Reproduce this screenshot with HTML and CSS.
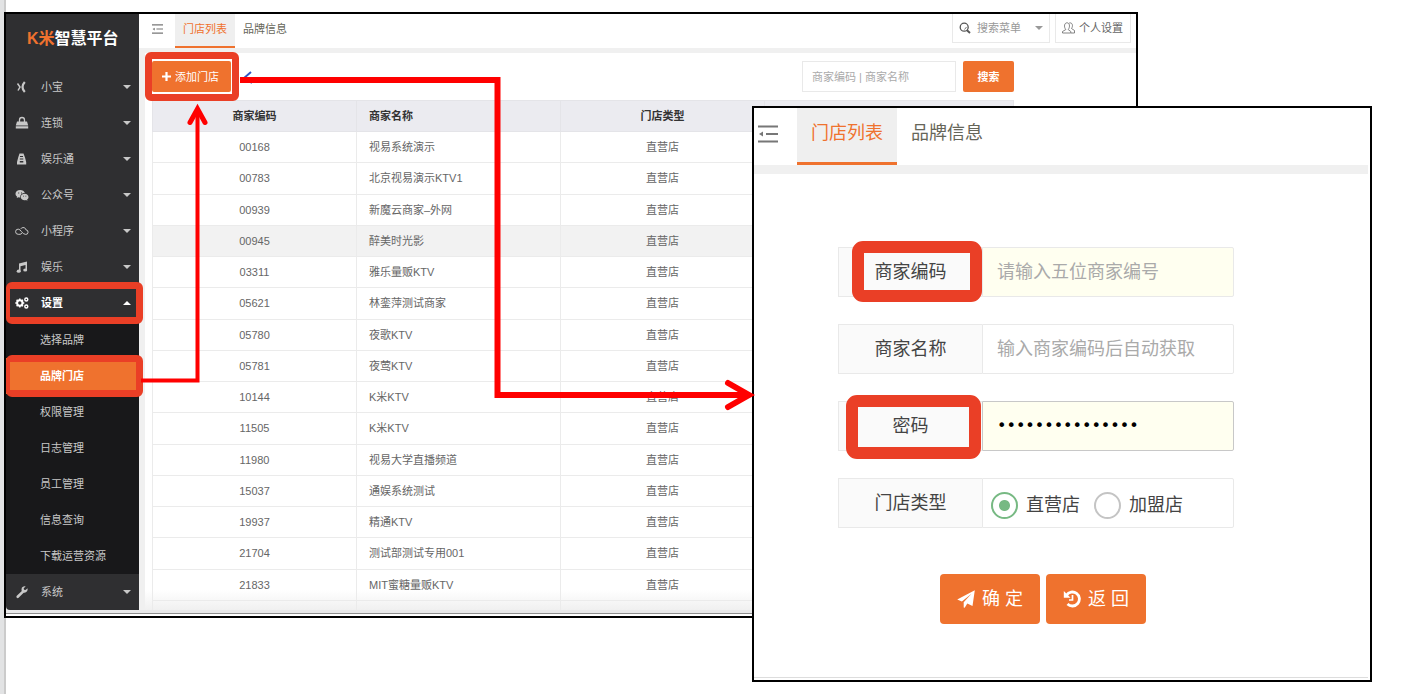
FILE: index.html
```html
<!DOCTYPE html>
<html lang="zh-CN">
<head>
<meta charset="utf-8">
<title>K米智慧平台</title>
<link rel="stylesheet" href="styles.css">
</head>
<body>
<main class="board">

  <section class="window console">
    <div class="console-body">
      <aside class="sidebar">
        <div class="logo"><span class="logo-mark">K米</span>智慧平台</div>
        <nav>
          <ul class="menu">
            <li><button class="menu-item" type="button">
              <svg class="menu-icon" viewBox="0 0 14 14"><path d="M2.5 3.5 5 7 3 10.5" fill="none" stroke="currentColor" stroke-width="1.5"/><path d="M9.8 2Q5.2 7 9.8 12" fill="none" stroke="currentColor" stroke-width="2.2"/></svg>
              <span>小宝</span><i class="caret"></i></button></li>
            <li><button class="menu-item" type="button">
              <svg class="menu-icon" viewBox="0 0 14 14"><path d="M2 5.5h10l1.2 4H.8zM.8 10.3h12.4v2.2H.8z" fill="currentColor"/><path d="M4.5 6V4a2.5 2.5 0 0 1 5 0v2" fill="none" stroke="currentColor" stroke-width="1.3"/></svg>
              <span>连锁</span><i class="caret"></i></button></li>
            <li><button class="menu-item" type="button">
              <svg class="menu-icon" viewBox="0 0 14 14"><path fill-rule="evenodd" d="M4.5 1.5h4l1.5 4 1.2 4.5v2.5H2V10l1.2-4.500zM5 4h3v1H5zm-.2 2.500h3.500v1H4.800zm0 2.500h3.500v1.500H4.800z" fill="currentColor"/></svg>
              <span>娱乐通</span><i class="caret"></i></button></li>
            <li><button class="menu-item" type="button">
              <svg class="menu-icon" viewBox="0 0 14 14"><path d="M5.200 2C2.500 2 .5 3.700.5 5.800c0 1.200.6 2.200 1.600 2.900L1.700 10l1.700-.8c.6.2 1.200.3 1.800.3C4.900 6.800 7 5 9.800 5 9.300 3.200 7.400 2 5.200 2z" fill="currentColor"/><path d="M9.600 5.800c-2.200 0-3.900 1.400-3.900 3.200s1.700 3.200 3.900 3.200c.5 0 1-.1 1.400-.2l1.500.7-.4-1.200c.9-.6 1.400-1.500 1.400-2.500 0-1.800-1.700-3.200-3.900-3.200z" fill="currentColor"/><path d="M3.200 4.400h1v1h-1zM6 4.400h1v1H6zM8 7.700h.9v.9H8zM10.400 7.700h.9v.9h-.9z" fill="#2f2f31"/></svg>
              <span>公众号</span><i class="caret"></i></button></li>
            <li><button class="menu-item" type="button">
              <svg class="menu-icon" viewBox="0 0 14 14"><path d="M5 10.300H3.200a2.600 2.600 0 0 1 0-5.200C6 5.100 7 10.400 10.600 10.400a2.300 2.300 0 0 0 .3-4.600C10.600 4.200 9.400 3.400 8 3.600c-1.500.1-2 .9-2.300 1.500M5 10.300c1 0 1.600-.6 2-1.300" fill="none" stroke="currentColor" stroke-width="1"/></svg>
              <span>小程序</span><i class="caret"></i></button></li>
            <li><button class="menu-item" type="button">
              <svg class="menu-icon" viewBox="0 0 14 14"><path d="M4 3.500 12 1.500v8.500h-1.500V5L5.500 6.300v5H4z" fill="currentColor"/><ellipse cx="3.700" cy="11.200" rx="2" ry="1.600" fill="currentColor"/><ellipse cx="10.200" cy="10" rx="2" ry="1.600" fill="currentColor"/></svg>
              <span>娱乐</span><i class="caret"></i></button></li>
            <li><button class="menu-item is-open" type="button" aria-expanded="true">
              <svg class="menu-icon" viewBox="0 0 14 14" fill="none" stroke="currentColor"><circle cx="4.800" cy="7" r="2.700" stroke-width="2"/><path d="M4.800 2.500v1.500M4.800 10v1.500M.3 7h1.500M7.800 7h1.500M1.600 3.800l1 1M7 9.200l1 1M8 3.800l-1 1M2.600 9.200l-1 1" stroke-width="1.500"/><circle cx="11.300" cy="3.500" r="1.500" stroke-width="1.400"/><circle cx="11.300" cy="10.500" r="1.500" stroke-width="1.400"/></svg>
              <span>设置</span><i class="caret caret-up"></i><i class="mark mark-row"></i></button>
              <ul class="submenu">
                <li><a href="#brand">选择品牌</a></li>
                <li><a class="is-active" href="#stores">品牌门店<i class="mark mark-row"></i></a></li>
                <li><a href="#roles">权限管理</a></li>
                <li><a href="#logs">日志管理</a></li>
                <li><a href="#staff">员工管理</a></li>
                <li><a href="#query">信息查询</a></li>
                <li><a href="#download">下载运营资源</a></li>
              </ul></li>
            <li><button class="menu-item" type="button">
              <svg class="menu-icon" viewBox="0 0 14 14"><path d="M2.700 11.800 8 6.600" stroke="currentColor" stroke-width="2.600" stroke-linecap="round"/><path d="M12.600 3.300 10.500 5 9 4.800l-.3-1.500L10.600 1.500C8.800 1 6.700 2 6.500 4.200c-.2 2 1.300 3.500 3 3.500 2.200-.1 3.500-2 3.100-4.400z" fill="currentColor"/></svg>
              <span>系统</span><i class="caret"></i></button></li>
          </ul>
        </nav>
      </aside>

      <div class="workspace">
        <header class="topbar">
          <button class="fold" type="button" aria-label="收起菜单"><svg viewBox="0 0 20 18"><path d="M0 1.500h20M8 9h12M0 16.500h20" stroke="currentColor" stroke-width="2"/><path d="M5 6.500v5L1 9z" fill="currentColor"/></svg></button>
          <nav class="tabs"><a class="is-active" href="#stores">门店列表</a><a href="#info">品牌信息</a></nav>
          <div class="tools">
            <label class="menu-search">
              <svg viewBox="0 0 12 12" fill="none" stroke="currentColor"><circle cx="5.200" cy="5.200" r="4" stroke-width="1.300"/><path d="M8 8.200 11 11" stroke-width="1.900"/><path d="M5.500 7.500 7.500 5" stroke-width=".8"/></svg>
              <select aria-label="搜索菜单"><option>搜索菜单</option></select>
              <i class="caret"></i>
            </label>
            <button class="profile" type="button">
              <svg viewBox="0 0 13 12" fill="none" stroke="currentColor" stroke-width=".8"><path d="M.5 11V9.500L3.800 7.600C1.500 4.500 2.500.8 5 .8s3.500 3.700 1.200 6.800l2.600 1.900V11zM7.200 1c3-.9 4.300 2.700 2.300 5.500L12.500 8.500V11H9"/></svg>
              个人设置</button>
          </div>
        </header>

        <div class="content">
          <div class="toolbar">
            <button class="btn btn-add" type="button"><svg viewBox="0 0 9 9"><path d="M4.500 0v9M0 4.500h9" stroke="currentColor" stroke-width="2.200"/></svg>添加门店<i class="mark mark-add"></i></button>
            <form class="filter">
              <input type="text" aria-label="商家编码或商家名称" placeholder="商家编码 | 商家名称">
              <button class="btn" type="button">搜索</button>
            </form>
          </div>
          <div class="table-clip">
            <table class="stores">
              <colgroup><col class="col-std"><col class="col-std"><col class="col-std"><col></colgroup>
              <thead><tr><th>商家编码</th><th class="name">商家名称</th><th>门店类型</th><th></th></tr></thead>
              <tbody>
                <tr><td>00168</td><td class="name">视易系统演示</td><td>直营店</td><td></td></tr>
                <tr><td>00783</td><td class="name">北京视易演示KTV1</td><td>直营店</td><td></td></tr>
                <tr><td>00939</td><td class="name">新魔云商家–外网</td><td>直营店</td><td></td></tr>
                <tr class="is-hover"><td>00945</td><td class="name">醉美时光影</td><td>直营店</td><td></td></tr>
                <tr><td>03311</td><td class="name">雅乐量贩KTV</td><td>直营店</td><td></td></tr>
                <tr><td>05621</td><td class="name">林銮萍测试商家</td><td>直营店</td><td></td></tr>
                <tr><td>05780</td><td class="name">夜歌KTV</td><td>直营店</td><td></td></tr>
                <tr><td>05781</td><td class="name">夜莺KTV</td><td>直营店</td><td></td></tr>
                <tr><td>10144</td><td class="name">K米KTV</td><td>直营店</td><td></td></tr>
                <tr><td>11505</td><td class="name">K米KTV</td><td>直营店</td><td></td></tr>
                <tr><td>11980</td><td class="name">视易大学直播频道</td><td>直营店</td><td></td></tr>
                <tr><td>15037</td><td class="name">通娱系统测试</td><td>直营店</td><td></td></tr>
                <tr><td>19937</td><td class="name">精通KTV</td><td>直营店</td><td></td></tr>
                <tr><td>21704</td><td class="name">测试部测试专用001</td><td>直营店</td><td></td></tr>
                <tr><td>21833</td><td class="name">MIT蜜糖量贩KTV</td><td>直营店</td><td></td></tr>
                <tr><td></td><td></td><td></td><td></td></tr>
              </tbody>
            </table>
          </div>
        </div>
      </div>
    </div>
  </section>

  <section class="window dialog">
    <header class="topbar">
      <button class="fold" type="button" aria-label="收起菜单"><svg viewBox="0 0 20 18"><path d="M0 1.500h20M8 9h12M0 16.500h20" stroke="currentColor" stroke-width="2"/><path d="M5 6.500v5L1 9z" fill="currentColor"/></svg></button>
      <nav class="tabs"><a class="is-active" href="#stores">门店列表</a><a href="#info">品牌信息</a></nav>
    </header>
    <form class="store-form">
      <div class="field"><label for="code">商家编码<i class="mark mark-code"></i></label><input id="code" class="is-filled" type="text" placeholder="请输入五位商家编号"></div>
      <div class="field"><label for="name">商家名称</label><input id="name" type="text" placeholder="输入商家编码后自动获取"></div>
      <div class="field"><label for="pwd">密码<i class="mark mark-pwd"></i></label><input id="pwd" class="is-filled is-focus" type="password" value="123456789012345"></div>
      <div class="field" role="radiogroup" aria-labelledby="kind"><span id="kind" class="field-name">门店类型</span>
        <div class="options">
          <label><input type="radio" name="kind" checked>直营店</label>
          <label><input type="radio" name="kind">加盟店</label>
        </div>
      </div>
      <div class="actions">
        <button class="btn" type="button"><svg viewBox="0 0 18 18"><path d="M17.800.2 15.500 16 10.300 13.600 7.700 17.800 6.700 17.500V12.300L14.500 3.800 4.900 11.400.2 9.400z" fill="currentColor"/></svg>确 定</button>
        <button class="btn" type="button"><svg viewBox="0 0 18 18"><path d="M3.500 5.200A7 7 0 1 1 4.500 14" fill="none" stroke="currentColor" stroke-width="2.800"/><path d="M.8 1v6.800h6.800z" fill="currentColor"/><path d="M9.500 5v5H6" fill="none" stroke="currentColor" stroke-width="1.700"/></svg>返 回</button>
      </div>
    </form>
  </section>

  <svg class="arrows" width="760" height="420" viewBox="0 0 760 420" fill="none">
    <path d="M251 72 244 78 252 83" stroke="#3157c4" stroke-width="2"/>
    <g stroke="#f00">
      <path d="M141 380.500H197.500V112" stroke-width="4"/>
      <path d="M190 122.500 197.500 109 205 122.500" stroke-width="5" stroke-linecap="round"/>
      <path d="M240 80H497.500V395H746" stroke-width="6"/>
      <path d="M728 383 749 395 728 407" stroke-width="6" stroke-linecap="round"/>
    </g>
  </svg>
</main>
</body>
</html>
```

FILE: styles.css
```css
:root {
  --orange: #ef722e;
  --mark: #ea3f26;
  --line: #e9e9e9;
}

* { box-sizing: border-box; }

body {
  margin: 0;
  background: #fff;
  color: #666;
  font: 11px/16px "Liberation Sans", "Noto Sans CJK SC", sans-serif;
}

button, input, select { font: inherit; color: inherit; }
button { border: 0; padding: 0; background: none; cursor: pointer; }
a { color: inherit; text-decoration: none; }
ul { list-style: none; margin: 0; padding: 0; }
svg { display: block; }

.board {
  position: relative;
  min-height: 100vh;
  padding: 12px 264px 12px 4px;
  background: linear-gradient(90deg, #e2e3e4 4px, #cbcbcb 4px 6px, #fff 6px);
}

.window { border: 2px solid #000; background: #fff; }

/* Main console */
.console { padding-bottom: 2px; }
.console-body {
  display: flex;
  border-bottom: 1px solid #8e8e8e;
  padding-bottom: 3px;
  background: #e9e9ea;
}

.sidebar {
  flex: 0 0 133px;
  background: #2f2f31;
  color: #c8c8c8;
  border-bottom-left-radius: 4px;
}
.logo {
  display: flex;
  height: 55px;
  padding-left: 21px;
  padding-bottom: 6px;
  align-items: center;
  color: #fff;
  font-size: 16px;
  font-weight: bold;
}
.logo-mark { color: var(--orange); }
.menu-item {
  position: relative;
  display: flex;
  align-items: center;
  width: 100%;
  height: 36px;
  padding: 0 8px 0 9px;
  text-align: left;
}
.menu-item span { flex: 1; }
.menu-icon { width: 14px; height: 14px; margin-right: 12px; }
.menu-item.is-open { color: #fff; font-weight: bold; }
.caret {
  border: 4px solid transparent;
  border-top-color: currentColor;
  border-bottom-width: 0;
}
.caret-up {
  border-width: 0 4px 4px;
  border-color: transparent transparent currentColor;
}
.submenu { background: #18181a; padding-top: 1px; }
.submenu a {
  position: relative;
  display: block;
  padding: 10px 0 10px 34px;
}
.submenu .is-active { background: var(--orange); color: #fff; font-weight: bold; }

.workspace {
  flex: 1;
  min-width: 0;
  display: flex;
  flex-direction: column;
  background: #f0f0f0;
}
.topbar { display: flex; background: #fff; }
.fold { color: #777; }
.tabs { display: flex; color: #666659; }
.tabs .is-active { background: #efefef; color: var(--orange); }

.console .topbar { height: 34px; }
.console .fold { width: 36px; padding-left: 13px; }
.console .fold svg { width: 11px; height: 10px; margin-top: -4px; }
.console .tabs a { padding: 7px 8px 9px; }
.console .tabs .is-active { border-bottom: 2px solid var(--orange); }
.tools {
  display: flex;
  gap: 5px;
  margin-left: auto;
  padding: 0 5px 5px 0;
}
.menu-search, .profile {
  display: flex;
  align-items: center;
  border: 1px solid var(--line);
  border-top: 0;
}
.menu-search { width: 98px; padding: 0 6px; color: #999; }
.menu-search svg { width: 12px; height: 12px; margin-right: 6px; color: #555; }
.menu-search select { flex: 1; min-width: 0; padding: 0; border: 0; background: none; appearance: none; }
.profile { width: 76px; padding: 0 6px; gap: 4px; white-space: nowrap; }
.profile svg { width: 13px; height: 12px; }

.content {
  flex: 1;
  margin: 5px 0 0 6px;
  padding: 8px 122px 0 7px;
  background: linear-gradient(#fff calc(100% - 20px), #f0f0f0);
}
.toolbar { display: flex; justify-content: space-between; height: 31px; margin-bottom: 8px; }
.btn { background: var(--orange); color: #fff; border-radius: 2px; }
.btn-add {
  position: relative;
  display: flex;
  align-items: center;
  gap: 4px;
  padding: 0 12px 0 10px;
}
.btn-add svg { width: 9px; height: 9px; }
.filter { display: flex; gap: 7px; }
.filter input {
  width: 154px;
  padding: 0 9px;
  border: 1px solid var(--line);
  background: #fff;
}
.filter .btn { width: 51px; font-weight: bold; }
input::placeholder { color: #aaa; opacity: 1; }

.table-clip { height: 510px; overflow: hidden; }
.stores {
  width: 100%;
  height: 532px;
  table-layout: fixed;
  border-collapse: collapse;
  text-align: center;
}
.col-std { width: 204px; }
.stores th, .stores td { height: 31px; padding: 0; border: 1px solid #ebebeb; }
.stores th { background: #ebebf0; color: #333; border-color: #e4e4e8; }
.stores .name { padding-left: 12px; text-align: left; }
.is-hover { background: #f2f2f2; }

/* Store dialog */
.dialog {
  position: absolute;
  top: 106px;
  left: 752px;
  right: 30px;
  font-size: 18px;
  line-height: 26px;
  padding: 0 2px 2px 0;
}
.dialog .topbar { border-bottom: 9px solid #f0f0f0; }
.dialog .fold { width: 43px; padding-left: 4px; }
.dialog .fold svg { width: 20px; height: 18px; margin-top: -6px; }
.dialog .tabs a { padding: 12px 14px 16px; }
.dialog .tabs .is-active { border-bottom: 3px solid var(--orange); }
.store-form {
  display: flex;
  flex-direction: column;
  gap: 27px;
  padding: 73px 134px 53px 84px;
  border-bottom: 1px solid #ddd;
}
.field { display: flex; height: 50px; color: #444; }
.field > label, .field-name {
  position: relative;
  flex: 0 0 144px;
  padding: 11px 0;
  border: 1px solid var(--line);
  border-right: 0;
  background: #fafafa;
  text-align: center;
}
.field > input, .options {
  flex: 1;
  min-width: 0;
  border: 1px solid var(--line);
  border-radius: 0 2px 2px 0;
  background: #fff;
}
.field > input { padding: 0 14px; }
.field > .is-filled { background: #fffff0; }
.field > .is-focus {
  border-color: #c8c8c8;
  color: #000;
  font-family: "DejaVu Sans", sans-serif;
  font-size: 16px;
}
.options { display: flex; align-items: center; gap: 14px; padding: 4px 8px 0; }
.options label { display: flex; align-items: center; gap: 8px; white-space: nowrap; }
.options input {
  width: 27px;
  height: 27px;
  margin: 0;
  border: 2px solid #c4c4c4;
  border-radius: 50%;
  appearance: none;
}
.options input:checked {
  border-color: #77b983;
  background: radial-gradient(circle, #77b983 5px, #fff 6px);
}
.actions { display: flex; gap: 6px; padding: 19px 0 0 102px; }
.actions .btn {
  display: flex;
  align-items: center;
  gap: 7px;
  height: 50px;
  padding: 0 17px;
  border-radius: 4px;
  white-space: pre;
}
.actions svg { width: 18px; height: 18px; }

/* Annotations over the content */
.mark {
  position: absolute;
  border: 7px solid var(--mark);
  border-radius: 6px;
  pointer-events: none;
}
.mark-row { inset: -3px -4px -3px 0; border-left-width: 4px; }
.mark-add { inset: -9px -8px -9px -7px; }
.mark-code, .mark-pwd { border-width: 12px; border-radius: 11px; }
.mark-code { inset: -7px 0 -6px 13px; }
.mark-pwd { inset: -7px 1px -9px 7px; }
.arrows { position: absolute; top: 0; left: 0; pointer-events: none; }
```
